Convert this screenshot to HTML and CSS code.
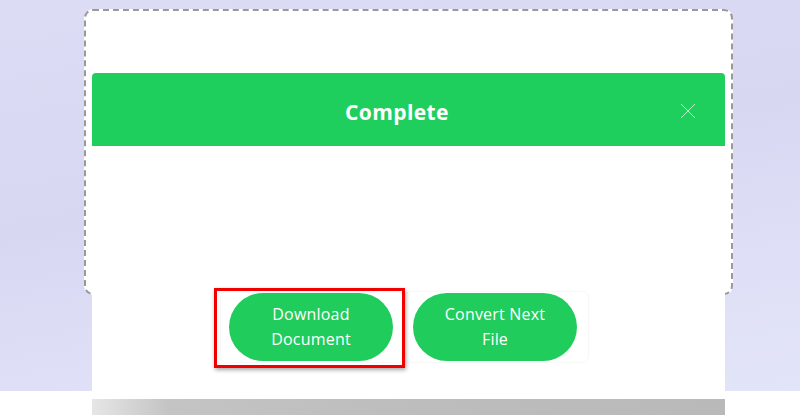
FILE: index.html
```html
<!DOCTYPE html>
<html lang="en">
<head>
    <meta charset="UTF-8">
    <meta name="viewport" content="width=device-width, initial-scale=1.0">
    <title>Complete</title>
    <link rel="stylesheet" href="styles.css">
</head>
<body>
    <div class="hero">
        <div class="dropzone"></div>
    </div>

    <div class="modal">
        <div class="modal-header">
            <h2>Complete</h2>
            <button class="close" aria-label="Close">
                <svg width="16" height="16" viewBox="0 0 16 16">
                    <path d="M1 1 L15 15 M15 1 L1 15" stroke="rgba(255,255,255,0.7)" stroke-width="1" fill="none"/>
                </svg>
            </button>
        </div>
        <div class="modal-body">
            <div class="actions">
                <div class="action-card">
                    <button class="pill">Download<br>Document</button>
                </div>
                <div class="action-card">
                    <button class="pill">Convert Next<br>File</button>
                </div>
            </div>
        </div>
    </div>
    <div class="modal-shadow"></div>

    <!-- highlight box drawn over the download button -->
    <div class="highlight"></div>
</body>
</html>
```

FILE: styles.css
```css
body {
    margin: 0;
    background-color: #fff;
    font-family: "Open Sans", Arial, sans-serif;
    height: 415px;
    overflow: hidden;
    position: relative;
}

.hero {
    height: 391px;
    padding-top: 9px;
    box-sizing: border-box;
    background: linear-gradient(170deg, #dcdcf5 0%, #d8d7f2 45%, #dfe0f7 75%, #e2e4f8 100%);
}

.dropzone {
    width: 649px;
    height: 286px;
    margin-left: 84px;
    box-sizing: border-box;
    border: 2px dashed #999;
    border-radius: 9px;
    background-color: #fff;
}

.modal {
    position: absolute;
    left: 92px;
    top: 73px;
    width: 633px;
    height: 326px;
    background-color: #fff;
}

.modal-header {
    height: 73px;
    box-sizing: border-box;
    padding: 5px 23px 0 0;
    background-color: #1fcf5d;
    border-radius: 4px 4px 0 0;
    display: flex;
    justify-content: center;
    align-items: center;
    position: relative;
}

.modal-header h2 {
    margin: 0;
    color: #fff;
    font-size: 21px;
    font-weight: 700;
    letter-spacing: 0.4px;
}

.close {
    position: absolute;
    right: 29px;
    top: 30px;
    background: none;
    border: none;
    padding: 0;
    width: 16px;
    height: 16px;
    cursor: pointer;
}

.close svg {
    display: block;
}

.modal-body {
    padding-top: 146px;
}

.actions {
    display: flex;
    padding-left: 129px;
    gap: 1px;
}

.action-card {
    width: 183px;
    height: 70px;
    box-sizing: border-box;
    padding: 1px 0 0 8px;
    border-radius: 6px;
    box-shadow: 0 0 3px rgba(0, 0, 0, 0.08);
}

.pill {
    width: 164px;
    height: 68px;
    border: none;
    border-radius: 34px;
    background-color: #20cc5c;
    color: #fff;
    font-family: "Open Sans", Arial, sans-serif;
    font-size: 16px;
    line-height: 25px;
    letter-spacing: 0.2px;
    padding: 0;
    cursor: pointer;
}

.modal-shadow {
    position: absolute;
    left: 92px;
    top: 399px;
    width: 633px;
    height: 16px;
    background: linear-gradient(90deg, #e6e6e6 0%, #c4c4c4 12%, #bdbdbd 50%, #b9b9b9 100%);
}

.highlight {
    position: absolute;
    left: 214px;
    top: 288px;
    width: 191px;
    height: 80px;
    box-sizing: border-box;
    border: 3px solid #f20000;
    box-shadow: 1px 2px 4px rgba(0, 0, 0, 0.35);
}
```
